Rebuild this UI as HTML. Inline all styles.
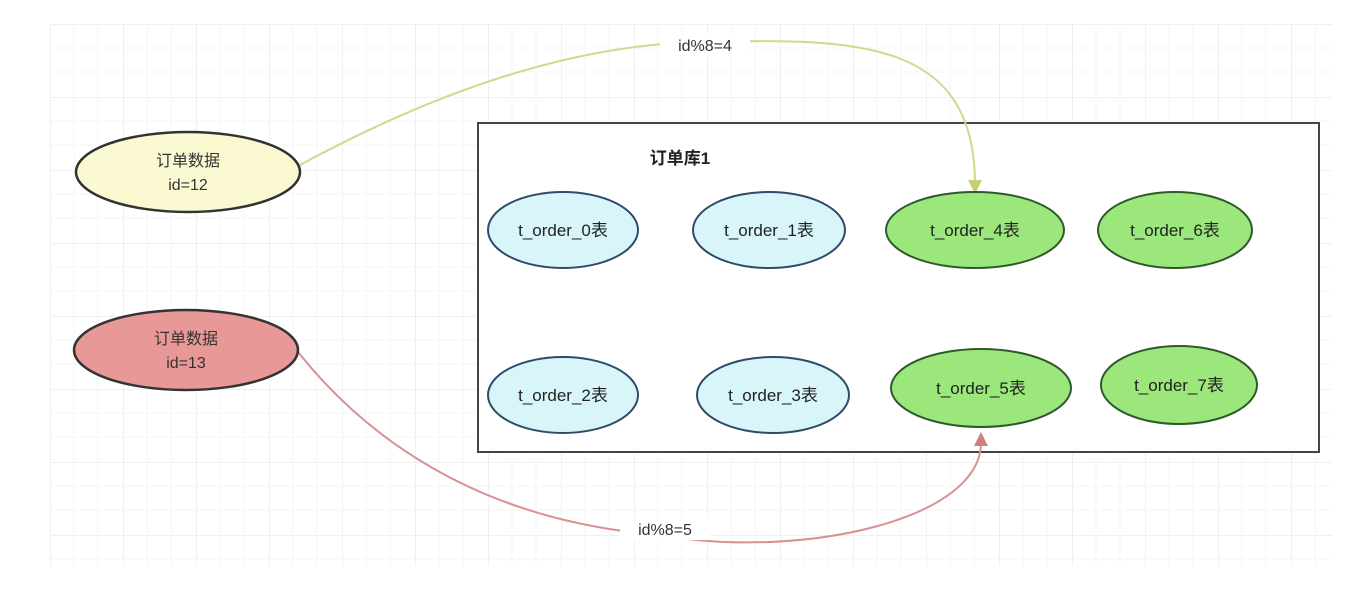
<!DOCTYPE html>
<html><head><meta charset="utf-8"><style>
body{margin:0;background:#fff;}
svg{display:block;font-family:"Liberation Sans","Noto Sans CJK SC",sans-serif;}
</style></head><body>
<svg width="1370" height="594" viewBox="0 0 1370 594">
<defs>
<pattern id="g" x="50" y="24" width="73" height="73" patternUnits="userSpaceOnUse">
<path d="M0 0V73M0 0H73" stroke="#ececec" stroke-width="1.5" fill="none"/>
<path d="M24 0V73M48 0V73M0 24H73M0 48H73" stroke="#f6f6f6" stroke-width="1" fill="none"/>
</pattern>
</defs>
<rect x="50" y="24" width="1282" height="542" fill="url(#g)"/>
<rect x="478" y="123" width="841" height="329" fill="#fff" stroke="#444" stroke-width="2"/>
<text x="680" y="164" font-size="17" font-weight="bold" fill="#222" text-anchor="middle">订单库1</text>

<path d="M300 165 C420 100 560 45 700 42 C860 38 975 40 975 185" stroke="#d2d88a" stroke-width="2" fill="none"/>
<path d="M968 180 L975 194 L982 180 Z" fill="#c9cf70"/>
<rect x="660" y="34" width="90" height="22" fill="#fff"/>
<text x="705" y="51" font-size="16" fill="#333" text-anchor="middle">id%8=4</text>

<path d="M298 352 C360 430 470 520 660 535 C800 560 985 520 981 440" stroke="#d99090" stroke-width="2" fill="none"/>
<path d="M974 446 L981 432 L988 446 Z" fill="#d08080"/>
<rect x="620" y="518" width="90" height="22" fill="#fff"/>
<text x="665" y="535" font-size="16" fill="#333" text-anchor="middle">id%8=5</text>

<g stroke="#333" stroke-width="2.5">
<ellipse cx="188" cy="172" rx="112" ry="40" fill="#fbf9d2"/>
<ellipse cx="186" cy="350" rx="112" ry="40" fill="#e89896"/>
</g>
<g font-size="16" fill="#333" text-anchor="middle">
<text x="188" y="166">订单数据</text><text x="188" y="190">id=12</text>
<text x="186" y="344">订单数据</text><text x="186" y="368">id=13</text>
</g>
<g stroke="#2f4a6a" stroke-width="2" fill="#d8f6fa">
<ellipse cx="563" cy="230" rx="75" ry="38"/>
<ellipse cx="769" cy="230" rx="76" ry="38"/>
<ellipse cx="563" cy="395" rx="75" ry="38"/>
<ellipse cx="773" cy="395" rx="76" ry="38"/>
</g>
<g stroke="#2e5a2a" stroke-width="2" fill="#9ce77c">
<ellipse cx="975" cy="230" rx="89" ry="38"/>
<ellipse cx="1175" cy="230" rx="77" ry="38"/>
<ellipse cx="981" cy="388" rx="90" ry="39"/>
<ellipse cx="1179" cy="385" rx="78" ry="39"/>
</g>
<g font-size="17" fill="#222" text-anchor="middle">
<text x="563" y="236">t_order_0表</text>
<text x="769" y="236">t_order_1表</text>
<text x="563" y="401">t_order_2表</text>
<text x="773" y="401">t_order_3表</text>
<text x="975" y="236">t_order_4表</text>
<text x="1175" y="236">t_order_6表</text>
<text x="981" y="394">t_order_5表</text>
<text x="1179" y="391">t_order_7表</text>
</g>
</svg>
</body></html>
